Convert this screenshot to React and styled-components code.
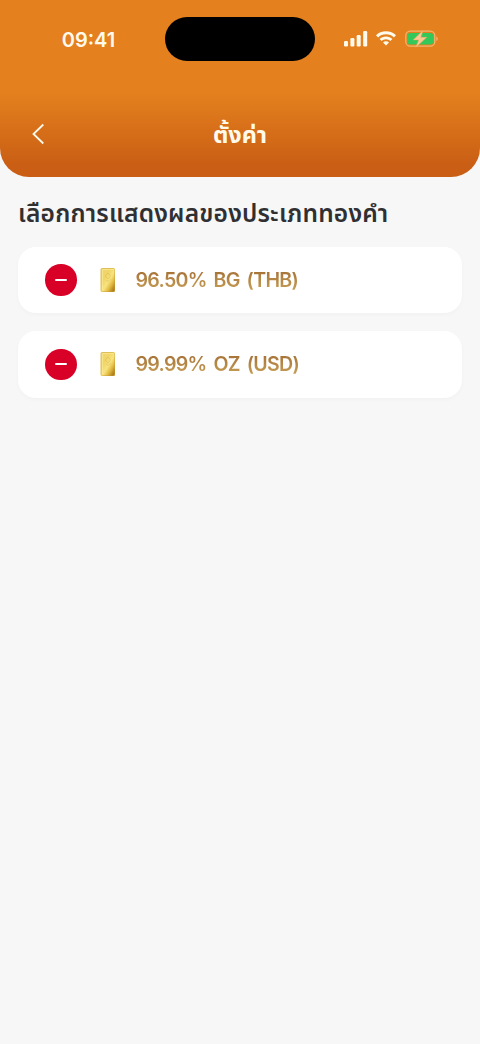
import React from "react";
import styled, { createGlobalStyle } from "styled-components";

const GlobalStyle = createGlobalStyle`
  * {
    box-sizing: border-box;
  }
  body {
    margin: 0;
    background: #f7f7f7;
    font-family: Inter, "Noto Sans Thai", "Noto Sans", sans-serif;
  }
`;

const Screen = styled.div`
  display: flex;
  flex-direction: column;
  width: 480px;
  height: 1044px;
  overflow: hidden;
  background: #f7f7f7;
`;

const Header = styled.header`
  flex: none;
  height: 177px;
  border-radius: 0 0 29px 29px;
  color: #fffaeb;
  background: linear-gradient(
    180deg,
    #e4801e 0,
    #e4801e 94px,
    #c95e14 166px,
    #c95e14 100%
  );
`;

const StatusBar = styled.div`
  display: grid;
  grid-template-columns: 165px 150px 165px;
  align-items: center;
  height: 78px;
`;

const Time = styled.div`
  padding: 1px 0 0 12px;
  text-align: center;
  font-size: 20px;
  line-height: 24px;
  font-weight: 600;
`;

const Island = styled.div`
  height: 44px;
  border-radius: 22px;
  background: #000;
`;

const StatusIcons = styled.div`
  padding-left: 28px;
  height: 20px;

  svg {
    display: block;
  }
`;

const NavBar = styled.div`
  display: grid;
  grid-template-columns: 48px 1fr 48px;
  align-items: center;
  height: 56px;
  margin-top: 28px;
`;

const BackButton = styled.button`
  display: block;
  width: 20px;
  height: 24px;
  margin-left: 28px;
  padding: 0;
  border: 0;
  color: inherit;
  background: none;

  svg {
    display: block;
  }
`;

const Title = styled.h1`
  margin: 0;
  padding-top: 1px;
  text-align: center;
  font-size: 23.5px;
  line-height: 32px;
  font-weight: 700;
`;

const Content = styled.main`
  padding: 18px 18px 0;
`;

const Heading = styled.h2`
  height: 34px;
  margin: 0 0 17.5px;
  color: #303033;
  font-size: 24.5px;
  line-height: 36px;
  font-weight: 600;
  white-space: nowrap;
  letter-spacing: 0.2px;
`;

const List = styled.div`
  display: flex;
  flex-direction: column;
  gap: 18px;
`;

const Row = styled.div`
  display: flex;
  align-items: center;
  height: 66.5px;
  padding-left: 27px;
  border-radius: 18px;
  background: #fff;
  box-shadow: 0 2px 5px rgba(0, 0, 0, 0.025);
`;

const RemoveButton = styled.button`
  display: flex;
  align-items: center;
  justify-content: center;
  width: 31.5px;
  height: 31.5px;
  padding: 0;
  border: 0;
  border-radius: 50%;
  background: #d80027;
`;

const Minus = styled.span`
  width: 12px;
  height: 2.4px;
  border-radius: 1px;
  background: #fff;
`;

const GoldBar = styled.svg`
  display: block;
  margin: 0 20px 0 23px;
`;

const Label = styled.span`
  font-size: 19.6px;
  line-height: 28px;
  font-weight: 600;
  white-space: nowrap;
  letter-spacing: -0.7px;
  word-spacing: 2.6px;
  color: transparent;
  background: linear-gradient(180deg, #a87539 22%, #c39a52 80%);
  background-clip: text;
`;

const goldTypes = [
  { id: "thb", name: "96.50% BG (THB)" },
  { id: "usd", name: "99.99% OZ (USD)" },
];

const GoldIcon = ({ id }) => (
  <GoldBar width="16" height="26" viewBox="0 0 16 26">
    <defs>
      <linearGradient id={`gold-${id}`} x1="0" y1="0" x2="1" y2="1">
        <stop offset="0" stopColor="#efd678" />
        <stop offset="0.35" stopColor="#f0d566" />
        <stop offset="0.55" stopColor="#f8e380" />
        <stop offset="0.72" stopColor="#e2bb42" />
        <stop offset="0.9" stopColor="#b07e1c" />
        <stop offset="1" stopColor="#c99b38" />
      </linearGradient>
    </defs>
    <rect x="0.6" y="1" width="14.400" height="24" rx="1.5" fill={`url(#gold-${id})`} />
    <rect x="1.1" y="1.5" width="13.400" height="23" rx="1" fill="none" stroke="#c79a35" strokeOpacity="0.4" />
    <path d="M2.5 23V2.5h11" fill="none" stroke="#fff2ad" strokeOpacity="0.6" strokeWidth="0.8" />
    <path d="M5 9l3-3 2.500 3L8 12zM6 13l2 1.500 2.500-2.500" fill="none" stroke="#dcbc58" strokeWidth="0.600" />
  </GoldBar>
);

const StatusGlyphs = () => (
  <svg width="96" height="20" viewBox="0 0 96 20">
    <g fill="#fffaeb">
      <rect x="1" y="12" width="4" height="5.5" rx="1.2" />
      <rect x="7.400" y="9" width="4" height="8.5" rx="1.2" />
      <rect x="13.700" y="6" width="4" height="11.5" rx="1.2" />
      <rect x="20.2" y="2" width="4" height="15.5" rx="1.2" />
      <path d="M43 2.300c-4 0-7.500 1.500-10 3.900l2.100 2.200c2-2 4.800-3.200 7.900-3.200s5.900 1.200 7.900 3.200L53 6.200c-2.500-2.400-6-3.900-10-3.900z" />
      <path d="M43 7.400c-2.600 0-4.800 1-6.400 2.600l2.100 2.100c1.100-1.100 2.600-1.800 4.300-1.800s3.200.7 4.300 1.800l2.100-2.100c-1.600-1.600-3.800-2.600-6.400-2.600z" />
      <path d="M43 12.200c-1.200 0-2.200.4-3 1.200l3 3.200 3-3.200c-.8-.8-1.800-1.200-3-1.200z" />
    </g>
    <rect x="62.800" y="2.200" width="29" height="15" rx="4.500" fill="none" stroke="#f4b36d" strokeWidth="1.300" />
    <rect x="64.500" y="4" width="25.600" height="11.500" rx="2.800" fill="#34c759" />
    <path d="M93.300 7.500c2 .5 2 4 0 4.500z" fill="#f4b36d" />
    <path d="M80 1.400L70.200 10.900h5.500L72.800 18.200 83.800 8.300h-6z" fill="#fcc893" stroke="#f0a95f" strokeWidth="0.500" strokeLinejoin="round" />
  </svg>
);

const App = () => {
  return (
    <Screen>
      <GlobalStyle />
      <Header>
        <StatusBar>
          <Time>09:41</Time>
          <Island />
          <StatusIcons>
            <StatusGlyphs />
          </StatusIcons>
        </StatusBar>
        <NavBar>
          <BackButton aria-label="ย้อนกลับ">
            <svg width="20" height="24" viewBox="0 0 20 24">
              <path d="M15.300 2.500L5.500 12l9.800 9.500" fill="none" stroke="currentColor" strokeWidth="1.800" />
            </svg>
          </BackButton>
          <Title>ตั้งค่า</Title>
        </NavBar>
      </Header>
      <Content>
        <Heading>เลือกการแสดงผลของประเภททองคำ</Heading>
        <List>
          {goldTypes.map((gold) => (
            <Row key={gold.id}>
              <RemoveButton aria-label="ลบ">
                <Minus />
              </RemoveButton>
              <GoldIcon id={gold.id} />
              <Label>{gold.name}</Label>
            </Row>
          ))}
        </List>
      </Content>
    </Screen>
  );
};

export default App;
